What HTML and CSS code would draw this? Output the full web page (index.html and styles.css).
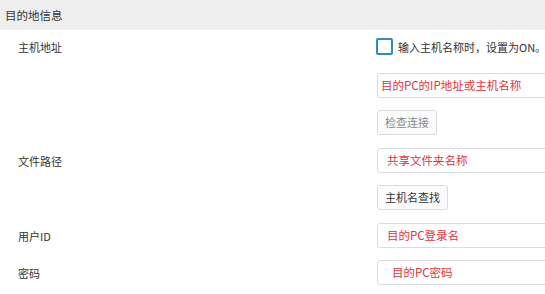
FILE: index.html
```html
<!DOCTYPE html>
<html lang="zh">
<head>
<meta charset="utf-8">
<link rel="stylesheet" href="styles.css">
</head>
<body>
<div class="header">目的地信息</div>
<div class="form">
  <div class="row row-first">
    <div class="label">主机地址</div>
    <div class="ctrl check-line"><span class="checkbox"></span><span class="check-text">输入主机名称时，设置为ON。</span></div>
  </div>
  <div class="row">
    <div class="label"></div>
    <div class="ctrl"><div class="input pad-4">目的PC的IP地址或主机名称</div></div>
  </div>
  <div class="row row-btn">
    <div class="label"></div>
    <div class="ctrl"><div class="btn btn-disabled">检查连接</div></div>
  </div>
  <div class="row">
    <div class="label">文件路径</div>
    <div class="ctrl"><div class="input pad-10">共享文件夹名称</div></div>
  </div>
  <div class="row row-btn">
    <div class="label"></div>
    <div class="ctrl"><div class="btn">主机名查找</div></div>
  </div>
  <div class="row">
    <div class="label">用户ID</div>
    <div class="ctrl"><div class="input pad-10">目的PC登录名</div></div>
  </div>
  <div class="row">
    <div class="label">密码</div>
    <div class="ctrl"><div class="input pad-15">目的PC密码</div></div>
  </div>
</div>
</body>
</html>
```
FILE: styles.css
```css
html, body {
  margin: 0;
  padding: 0;
  background: #ffffff;
  overflow: hidden;
}
body {
  width: 545px;
  height: 294px;
  font-family: "Noto Sans CJK SC", "Noto Sans", sans-serif;
  font-size: 11px;
  color: #333333;
}
.header {
  height: 30px;
  line-height: 31px;
  background: #efefef;
  padding-left: 5px;
  font-size: 11.5px;
  color: #333;
}
.form {
  display: flex;
  flex-direction: column;
  gap: 12px;
  padding-top: 8px;
}
.row {
  display: grid;
  grid-template-columns: 377px minmax(0, 1fr);
  align-items: center;
}
.row-first {
  margin-bottom: 6px;
}
.row-btn {
  margin-bottom: 1px;
}
.label {
  padding-left: 18px;
  font-size: 11px;
  color: #333;
}
.ctrl {
  display: flex;
  align-items: center;
  overflow: hidden;
}
.check-line {
  margin-left: -1px;
  height: 17px;
  overflow: visible;
}
.checkbox {
  box-sizing: border-box;
  flex: none;
  width: 17px;
  height: 17px;
  border: 2px solid #2b8fc6;
  border-radius: 2px;
  background: #fff;
}
.check-text {
  margin-left: 5px;
  font-size: 11px;
  color: #333;
  white-space: nowrap;
}
.input {
  box-sizing: border-box;
  flex: none;
  width: 200px;
  height: 25px;
  line-height: 23px;
  border: 1px solid #dcdcdc;
  border-radius: 3px;
  color: #e0323c;
  font-size: 11.5px;
  background: #fff;
  white-space: nowrap;
}
.pad-4 { padding-left: 3px; }
.pad-10 { padding-left: 9px; }
.pad-15 { padding-left: 14px; }
.btn {
  box-sizing: border-box;
  flex: none;
  height: 25px;
  line-height: 23px;
  padding: 0 7px;
  border: 1px solid #dcdcdc;
  border-radius: 3px;
  background: #fbfbfb;
  color: #333;
  font-size: 11px;
}
.btn-disabled {
  color: #888;
}
```
